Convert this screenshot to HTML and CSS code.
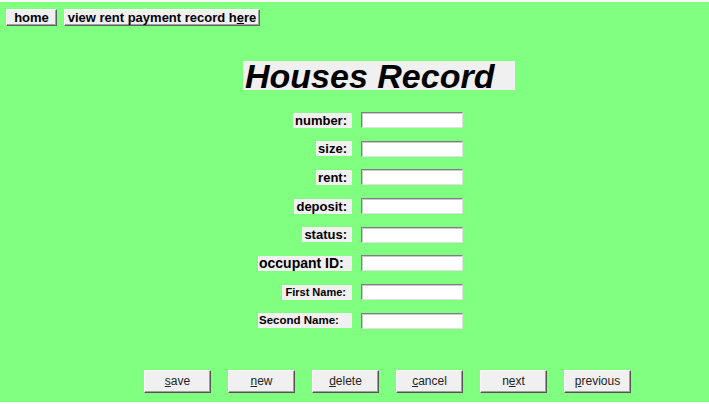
FILE: index.html
```html
<!DOCTYPE html>
<html>
<head>
<meta charset="utf-8">
<title>Houses Record</title>
<link rel="stylesheet" href="styles.css">
</head>
<body>
<div class="page">
  <div class="topbar">
    <button class="navbtn navbtn-home">home</button>
    <button class="navbtn navbtn-view">view rent payment record h<u>e</u>re</button>
  </div>
  <div class="title-row">
    <h1 class="title">Houses Record</h1>
  </div>
  <form class="form">
    <div class="cell-label"><span class="label">number:</span></div><div class="field"></div>
    <div class="cell-label"><span class="label">size:</span></div><div class="field"></div>
    <div class="cell-label"><span class="label">rent:</span></div><div class="field"></div>
    <div class="cell-label"><span class="label">deposit:</span></div><div class="field"></div>
    <div class="cell-label"><span class="label">status:</span></div><div class="field"></div>
    <div class="cell-label"><span class="label label-wide label-big">occupant ID:</span></div><div class="field"></div>
    <div class="cell-label"><span class="label label-small label-first">First Name:</span></div><div class="field"></div>
    <div class="cell-label"><span class="label label-wide label-small label-second">Second Name:</span></div><div class="field"></div>
  </form>
  <div class="actions">
    <button class="actbtn"><u>s</u>ave</button>
    <button class="actbtn"><u>n</u>ew</button>
    <button class="actbtn"><u>d</u>elete</button>
    <button class="actbtn"><u>c</u>ancel</button>
    <button class="actbtn">n<u>e</u>xt</button>
    <button class="actbtn"><u>p</u>revious</button>
  </div>
</div>
</body>
</html>
```
FILE: styles.css
```css
html, body {
  margin: 0;
  padding: 0;
}
body {
  width: 709px;
  height: 404px;
  background: #f4fff4;
  font-family: "Liberation Sans", Arial, sans-serif;
  overflow: hidden;
}
.page {
  box-sizing: border-box;
  margin-top: 2px;
  height: 400px;
  background: #80ff80;
  padding-top: 7px;
}
.topbar {
  display: flex;
  gap: 7px;
  padding-left: 6px;
}
button {
  font-family: "Liberation Sans", Arial, sans-serif;
  margin: 0;
  cursor: default;
}
.navbtn {
  box-sizing: border-box;
  height: 17px;
  padding: 0;
  font-size: 13px;
  font-weight: bold;
  color: #000;
  background: #f0f0f0;
  border: 1px solid;
  border-color: #ffffff #606060 #606060 #ffffff;
  box-shadow: inset -1px -1px 0 #a0a0a0;
  line-height: 14px;
  text-align: center;
}
.navbtn-home {
  width: 51px;
}
.navbtn-view {
  width: 196px;
}
.title-row {
  margin-top: 35px;
  padding-left: 243px;
}
.title {
  margin: 0;
  width: 272px;
  height: 29px;
  box-sizing: border-box;
  background: #f0f0f0;
  font-size: 34px;
  font-weight: bold;
  font-style: italic;
  line-height: 30px;
  padding-left: 2px;
  color: #000;
}
.form {
  margin: 22px 0 0 0;
  display: grid;
  grid-template-columns: 352px 102px;
  column-gap: 9px;
  grid-auto-rows: 16px;
  row-gap: 12.7px;
}
.cell-label {
  display: flex;
  justify-content: flex-end;
  align-items: center;
}
.label {
  display: inline-block;
  background: #f0f0f0;
  height: 15px;
  line-height: 15px;
  font-size: 13px;
  font-weight: bold;
  color: #000;
  padding: 0 5px 0 2px;
  white-space: nowrap;
}
.label-wide {
  box-sizing: border-box;
  width: 94px;
  padding: 0 0 0 1px;
  text-align: left;
}
.label-big {
  font-size: 14px;
}
.label-small {
  font-size: 11px;
}
.label-first {
  box-sizing: border-box;
  width: 70px;
  padding: 0 6px 0 3px;
  text-align: right;
}
.label-second {
  font-size: 11.5px;
}
.field {
  box-sizing: border-box;
  height: 16px;
  background: #ffffff;
  border: 1px solid;
  border-color: #808080 #e0e0e0 #e0e0e0 #808080;
  box-shadow: inset 1px 1px 0 #c8c8c8;
}
.actions {
  margin-top: 41px;
  display: flex;
  gap: 17px;
  padding-left: 144px;
}
.actbtn {
  box-sizing: border-box;
  width: 67px;
  height: 23px;
  padding: 0;
  font-size: 12px;
  color: #222;
  background: #f0f0f0;
  border: 1px solid;
  border-color: #ffffff #555555 #555555 #ffffff;
  box-shadow: inset -1px -1px 0 #a0a0a0;
}
```
